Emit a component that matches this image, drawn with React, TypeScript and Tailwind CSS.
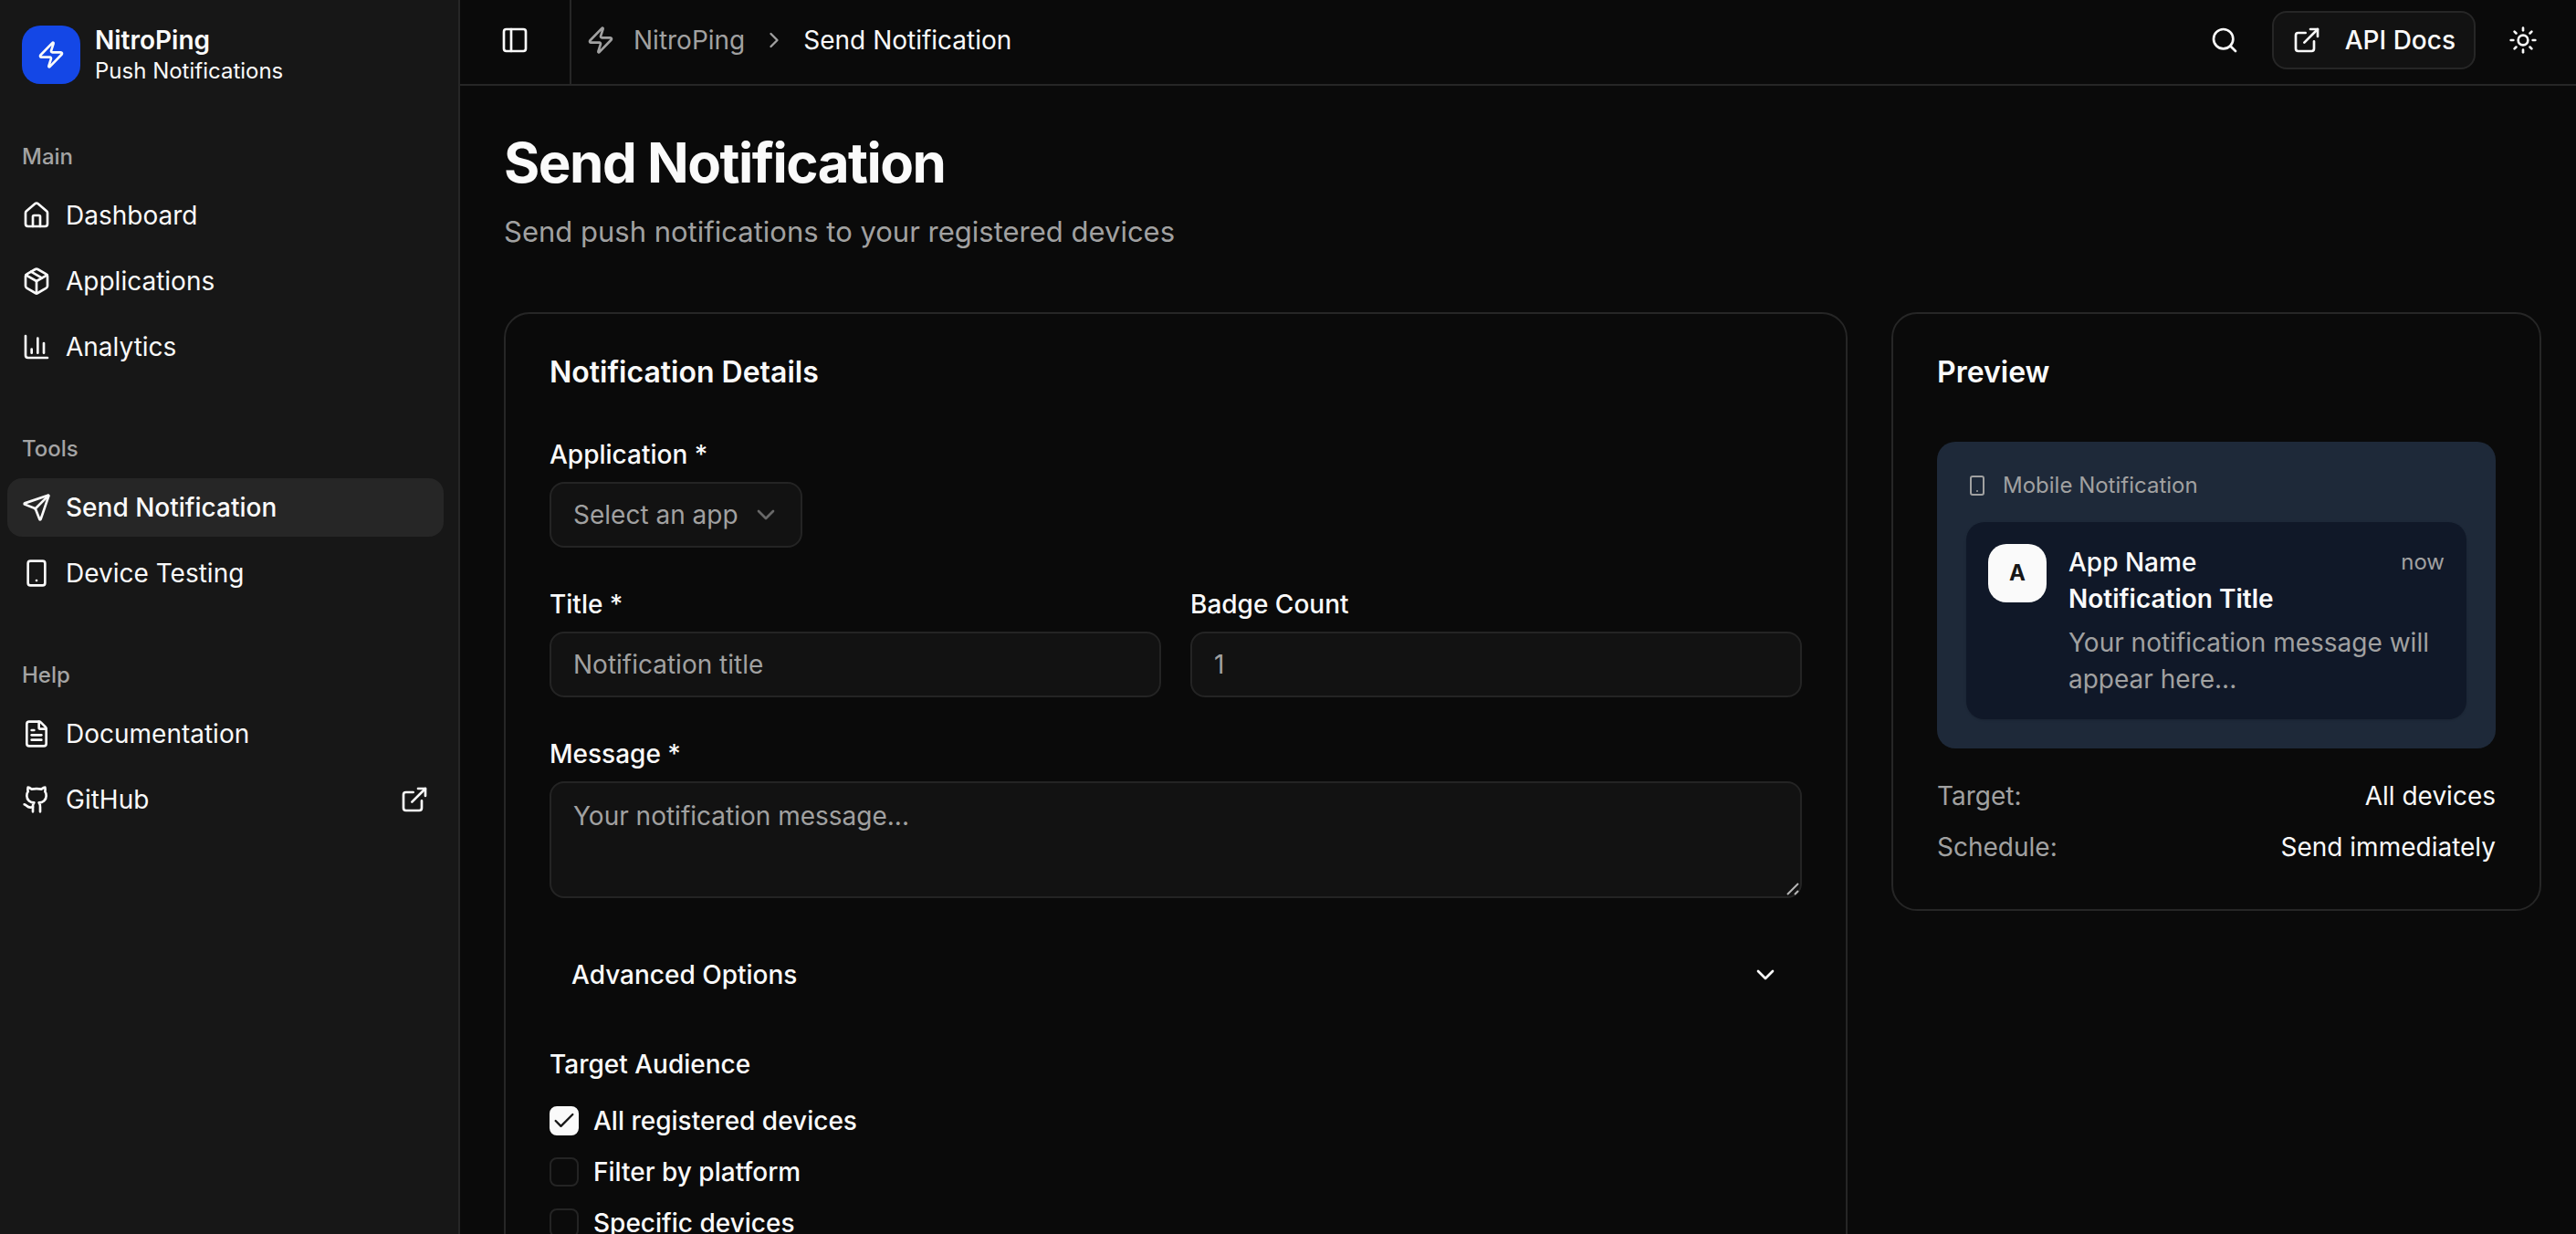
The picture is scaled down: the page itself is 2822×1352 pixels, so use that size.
import { useState } from "react";
import type { ReactNode } from "react";
import {
  ChartColumn,
  Check,
  ChevronDown,
  ChevronRight,
  ExternalLink,
  FileText,
  Github,
  House,
  Package,
  PanelLeft,
  Search,
  Send,
  Smartphone,
  Sun,
  Zap,
} from "lucide-react";
import type { LucideIcon } from "lucide-react";

type NavEntry = {
  label: string;
  icon: LucideIcon;
  active?: boolean;
  external?: boolean;
};

const NAV: { title: string; entries: NavEntry[] }[] = [
  {
    title: "Main",
    entries: [
      { label: "Dashboard", icon: House },
      { label: "Applications", icon: Package },
      { label: "Analytics", icon: ChartColumn },
    ],
  },
  {
    title: "Tools",
    entries: [
      { label: "Send Notification", icon: Send, active: true },
      { label: "Device Testing", icon: Smartphone },
    ],
  },
  {
    title: "Help",
    entries: [
      { label: "Documentation", icon: FileText },
      { label: "GitHub", icon: Github, external: true },
    ],
  },
];

const AUDIENCES = ["All registered devices", "Filter by platform", "Specific devices"];

const FIELD =
  "w-full rounded-2xl border-2 border-[#242424] bg-[#121212] px-6 text-[28px] leading-10 text-neutral-50 placeholder:text-[#a1a1a1] outline-none";

function Sidebar() {
  return (
    <aside className="w-[504px] shrink-0 border-r-2 border-[#262626] bg-[#171717] pt-7 pr-4 pl-2">
      <div className="flex h-16 items-center gap-4 px-4">
        <div className="flex size-16 items-center justify-center rounded-[20px] bg-[#1447e6]">
          <Zap className="size-8" />
        </div>
        <div>
          <div className="text-[28px] leading-[35px] font-semibold">NitroPing</div>
          <div className="text-[24px] leading-8">Push Notifications</div>
        </div>
      </div>
      <nav className="mt-12 flex flex-col gap-12">
        {NAV.map((group) => (
          <section key={group.title}>
            <h2 className="flex h-16 items-center px-4 text-[24px] leading-8 font-medium text-[#a4a4a4]">
              {group.title}
            </h2>
            <ul className="flex flex-col gap-2">
              {group.entries.map(({ label, icon: Icon, active, external }) => (
                <li key={label}>
                  <a
                    href="#"
                    className={
                      active
                        ? "flex h-16 items-center gap-4 rounded-2xl bg-[#262626] px-4 text-[28px] leading-10 font-medium"
                        : "flex h-16 items-center gap-4 rounded-2xl px-4 text-[28px] leading-10"
                    }
                  >
                    <Icon className="size-8 shrink-0" />
                    <span>{label}</span>
                    {external && <ExternalLink className="ml-auto size-8" />}
                  </a>
                </li>
              ))}
            </ul>
          </section>
        ))}
      </nav>
    </aside>
  );
}

function TopBar() {
  return (
    <header className="flex shrink-0 border-b-2 border-[#262626]">
      <div className="flex items-center border-r-2 border-[#262626] pt-3 pr-7 pb-4 pl-7">
        <button type="button" aria-label="Toggle sidebar" className="flex size-16 items-center justify-center">
          <PanelLeft className="size-8" />
        </button>
      </div>
      <nav aria-label="Breadcrumb" className="flex items-center pt-3 pb-4 pl-4 text-[28px] leading-10">
        <a href="#" className="flex items-center gap-5 text-[#a1a1a1]">
          <Zap className="size-8" />
          NitroPing
        </a>
        <ChevronRight className="mx-4.5 size-7 text-[#a1a1a1]" />
        <span aria-current="page">Send Notification</span>
      </nav>
      <div className="ml-auto flex items-center gap-5 pt-3 pr-[26px] pb-4">
        <button type="button" aria-label="Search" className="flex size-16 items-center justify-center">
          <Search className="size-8" />
        </button>
        <a
          href="#"
          className="flex h-16 items-center gap-6.5 rounded-2xl border-2 border-[#262626] bg-[#121212] px-5 text-[28px] leading-10 font-medium"
        >
          <ExternalLink className="size-8" />
          API Docs
        </a>
        <button type="button" aria-label="Toggle theme" className="flex size-16 items-center justify-center">
          <Sun className="size-8" />
        </button>
      </div>
    </header>
  );
}

function Card({ title, className, children }: { title: string; className?: string; children: ReactNode }) {
  return (
    <section className={"rounded-[28px] border-2 border-[#262626] p-12 " + (className ?? "")}>
      <h2 className="mb-15 text-[32px] leading-8 font-semibold">{title}</h2>
      {children}
    </section>
  );
}

function Field({ id, label, children }: { id: string; label: string; children: ReactNode }) {
  return (
    <div className="flex flex-col gap-4">
      <label htmlFor={id} className="text-[28px] leading-7 font-medium">
        {label}
      </label>
      {children}
    </div>
  );
}

function DetailsForm() {
  const [audience, setAudience] = useState(AUDIENCES[0]);
  return (
    <form className="flex flex-col gap-12">
      <Field id="application" label="Application *">
        <div className="relative w-fit">
          <select
            id="application"
            defaultValue=""
            className="h-18 appearance-none rounded-2xl border-2 border-[#242424] bg-[#121212] pr-17 pl-6 text-[28px] leading-10 text-[#a1a1a1] outline-none"
          >
            <option value="">Select an app</option>
          </select>
          <ChevronDown className="pointer-events-none absolute top-5 right-6 size-8 text-[#a1a1a1] opacity-60" />
        </div>
      </Field>
      <div className="grid grid-cols-2 gap-8">
        <Field id="title" label="Title *">
          <input id="title" type="text" placeholder="Notification title" className={FIELD + " h-18"} />
        </Field>
        <Field id="badge" label="Badge Count">
          <input id="badge" type="text" inputMode="numeric" placeholder="1" className={FIELD + " h-18"} />
        </Field>
      </div>
      <Field id="message" label="Message *">
        <div className="relative flex">
          <textarea
            id="message"
            placeholder="Your notification message..."
            className={FIELD + " h-32 resize-none py-4"}
          />
          <svg
            aria-hidden="true"
            viewBox="0 0 14 14"
            className="pointer-events-none absolute right-[3px] bottom-[3px] size-3.5 stroke-[#b5b5b5]"
            strokeWidth="2"
          >
            <path d="M1 13 13 1M9 13l4-4" />
          </svg>
        </div>
      </Field>
      <button type="button" className="flex h-18 items-center justify-between px-6 text-[28px] leading-10 font-medium">
        Advanced Options
        <ChevronDown className="size-8" />
      </button>
      <fieldset>
        <legend className="mb-8 text-[28px] leading-7 font-medium">Target Audience</legend>
        <div className="flex flex-col gap-6">
          {AUDIENCES.map((name) => (
            <label key={name} className="flex items-center gap-4 text-[28px] leading-8 font-medium">
              <span className="relative flex size-8">
                <input
                  type="checkbox"
                  checked={audience === name}
                  onChange={() => setAudience(name)}
                  className="peer size-8 appearance-none rounded-lg border-2 border-[#242424] bg-[#0b0b0b] checked:border-neutral-50 checked:bg-neutral-50"
                />
                <Check className="pointer-events-none absolute inset-0 m-auto hidden size-7 text-neutral-900 peer-checked:block" />
              </span>
              {name}
            </label>
          ))}
        </div>
      </fieldset>
    </form>
  );
}

function PreviewPane() {
  return (
    <>
      <div className="rounded-[20px] bg-[#1e2939] p-8">
        <div className="mb-6 flex items-center gap-4 text-[24px] leading-8 text-[#a1a1a1]">
          <Smartphone className="size-6" />
          Mobile Notification
        </div>
        <div className="flex items-start gap-6 rounded-[20px] bg-[#101828] p-6 shadow-sm">
          <div className="flex size-16 shrink-0 items-center justify-center rounded-[20px] bg-neutral-50 text-[24px] leading-8 font-bold text-neutral-900">
            A
          </div>
          <div className="min-w-0 flex-1 text-[28px] leading-10">
            <div className="flex items-center justify-between">
              <span className="font-medium">App Name</span>
              <span className="text-[24px] leading-8 text-[#a1a1a1]">now</span>
            </div>
            <div className="font-semibold">Notification Title</div>
            <p className="mt-2 text-[#a1a1a1]">Your notification message will appear here...</p>
          </div>
        </div>
      </div>
      <dl className="mt-8 flex flex-col gap-4 text-[28px] leading-10">
        <div className="flex justify-between">
          <dt className="text-[#a1a1a1]">Target:</dt>
          <dd>All devices</dd>
        </div>
        <div className="flex justify-between">
          <dt className="text-[#a1a1a1]">Schedule:</dt>
          <dd>Send immediately</dd>
        </div>
      </dl>
    </>
  );
}

export default function App() {
  return (
    <div className="flex h-screen overflow-hidden bg-[#0a0a0a] font-['Inter',sans-serif] text-neutral-50 antialiased">
      <Sidebar />
      <div className="flex min-w-0 flex-1 flex-col">
        <TopBar />
        <main className="flex-1 overflow-y-auto py-12 pr-[38px] pl-12 [scrollbar-width:none]">
          <h1 className="text-[60px] leading-[72px] font-bold tracking-tight">Send Notification</h1>
          <p className="mt-4 text-[31px] leading-[48px] text-[#a1a1a1]">
            Send push notifications to your registered devices
          </p>
          <div className="mt-16 grid grid-cols-3 items-start gap-12">
            <Card title="Notification Details" className="col-span-2">
              <DetailsForm />
            </Card>
            <Card title="Preview">
              <PreviewPane />
            </Card>
          </div>
        </main>
      </div>
    </div>
  );
}
